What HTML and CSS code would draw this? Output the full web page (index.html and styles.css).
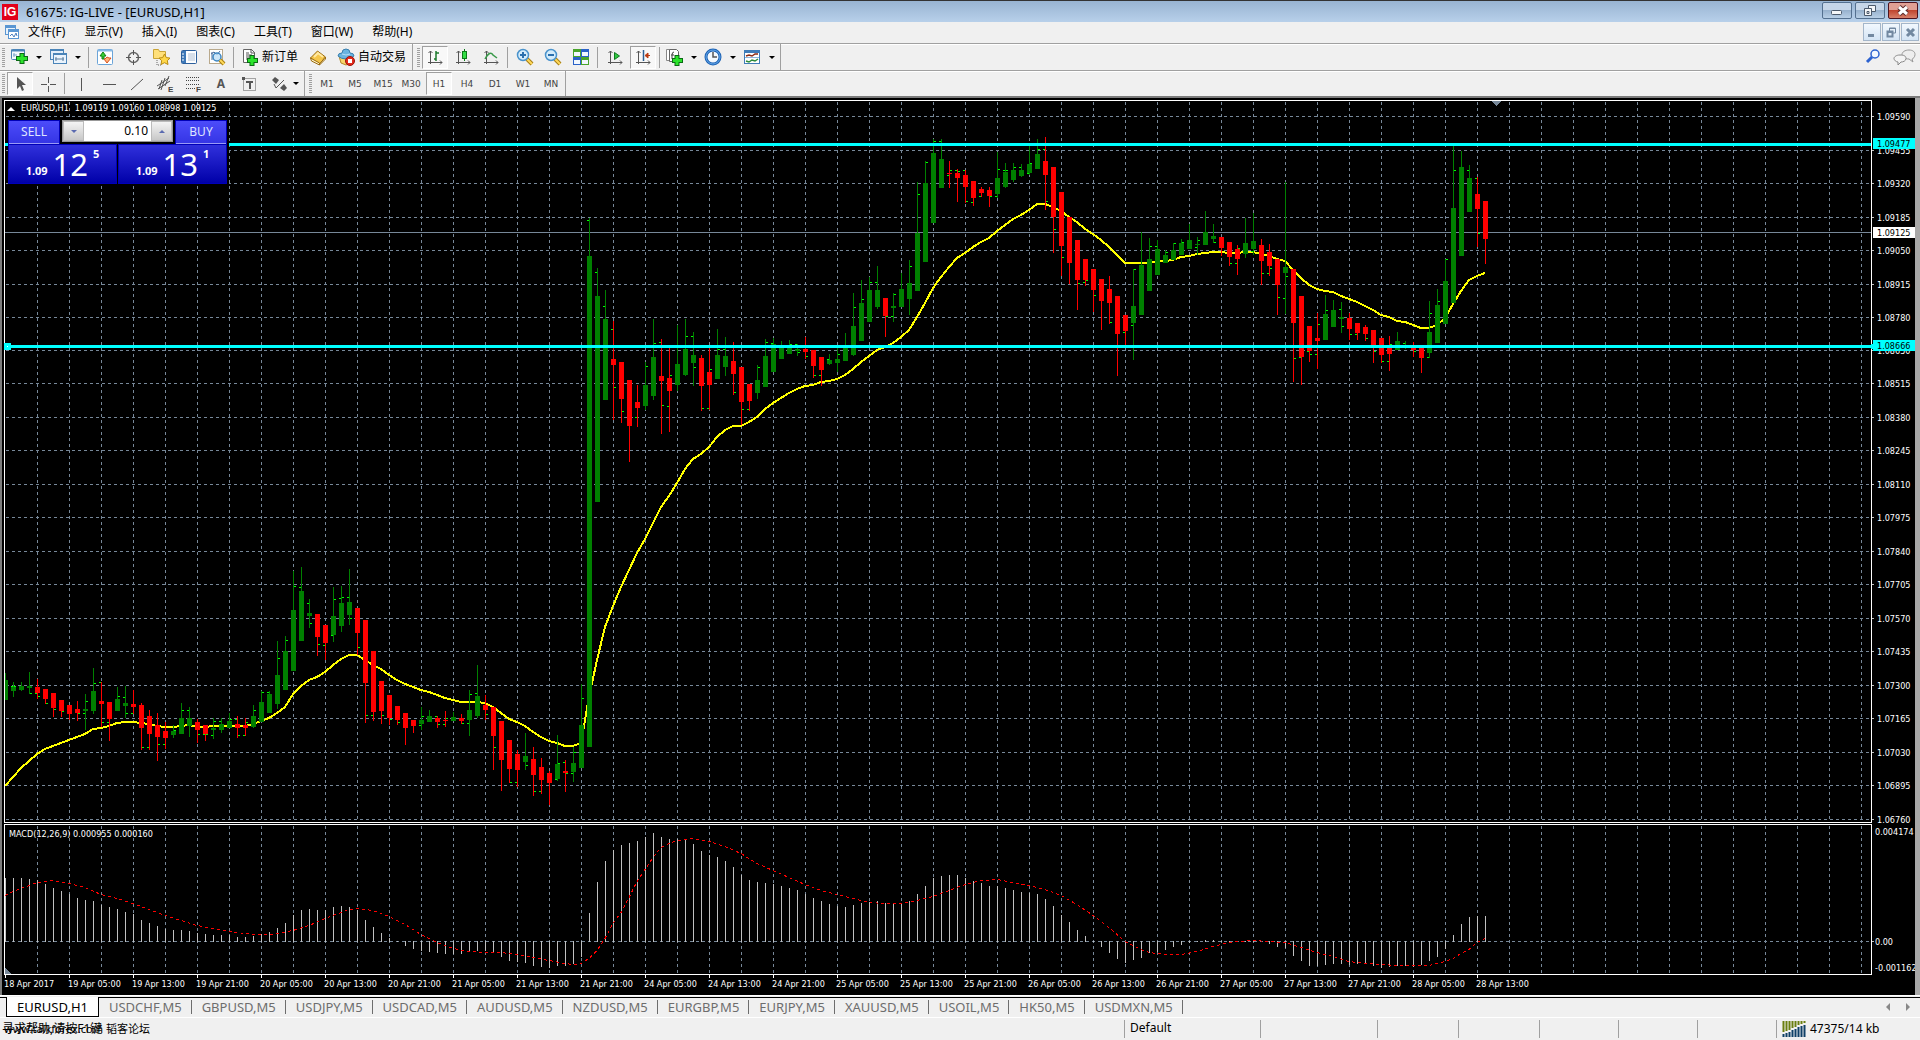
FILE: index.html
```html
<!DOCTYPE html>
<html lang="zh">
<head>
<meta charset="utf-8">
<title>61675: IG-LIVE - [EURUSD,H1]</title>
<link rel="stylesheet" href="styles.css">
</head>
<body>
<header class="titlebar">
  <span class="logo">IG</span>
  <h1 class="title">61675: IG-LIVE - [EURUSD,H1]</h1>
  <div class="win-buttons">
    <button class="win" aria-label="Minimize"><svg width="28" height="15"><rect x="8.5" y="7.5" width="10" height="4" rx="1" fill="#f4f6f8" stroke="#4c5a6c"/></svg></button>
    <button class="win" aria-label="Restore"><svg width="28" height="15"><g fill="#f4f6f8" stroke="#4c5a6c"><path d="M12.500 2.500h7v6h-7z"/><path d="M8.500 5.500h7v7h-7z"/></g><path d="M11 8.500h2v2h-2z" fill="none" stroke="#4c5a6c"/></svg></button>
    <button class="win win-close" aria-label="Close"><svg width="28" height="15"><path d="M10 4l8 7M18 4l-8 7" stroke="#5a2a2a" stroke-width="5"/><path d="M10 4l8 7M18 4l-8 7" stroke="#fff" stroke-width="3"/></svg></button>
  </div>
</header>

<nav class="menubar">
  <svg class="mdi-icon" width="16" height="16"><rect x="1.500" y="1.500" width="10" height="9" fill="#e8f2fc" stroke="#5a96d2"/><rect x="4.500" y="5.500" width="10" height="9" fill="#fff" stroke="#5a96d2"/><path d="M1 3h11M4 7h11" stroke="#5a96d2" stroke-width="2"/><path d="M6 12l2-2 2 3 2-4 1 3" fill="none" stroke="#4a7fc0"/></svg>
  <a href="#">文件(F)</a><a href="#">显示(V)</a><a href="#">插入(I)</a><a href="#">图表(C)</a><a href="#">工具(T)</a><a href="#">窗口(W)</a><a href="#">帮助(H)</a>
  <div class="mdi-buttons">
    <button class="mdi" aria-label="Minimize chart"><svg width="16" height="16"><path d="M4 11.500h6" stroke="#7288a0" stroke-width="3"/></svg></button>
    <button class="mdi" aria-label="Restore chart"><svg width="16" height="16"><path d="M6.500 7V4h6v5H10M6 4.500h7" fill="none" stroke="#7288a0"/><path d="M4.500 7.500h5v5h-5zM4 8h6" fill="none" stroke="#7288a0" stroke-width="2"/></svg></button>
    <button class="mdi" aria-label="Close chart"><svg width="16" height="16"><path d="M5 5l7 7M12 5l-7 7" stroke="#7288a0" stroke-width="3"/></svg></button>
  </div>
</nav>

<div class="bar">
  <div class="group">
    <i class="grip"></i>
    <button class="tool drop" aria-label="New chart"><svg width="18" height="18"><rect x="1.500" y="1.500" width="13" height="10" rx="1" fill="#f4f9ff" stroke="#4a84b8"/><path d="M1 2.500h14" stroke="#4a84b8" stroke-width="2"/><path d="M4 5v4M3 7h4" stroke="#7ba3c8"/><path d="M12 5v11M6 10.500h12" stroke="#0a6a14" stroke-width="5"/><path d="M12 6v9M7 10.500h10" stroke="#2be32b" stroke-width="3"/></svg></button>
    <button class="tool drop" aria-label="Profiles"><svg width="18" height="18"><rect x="1.500" y="1.500" width="13" height="10" fill="#e2eefa" stroke="#4a84b8"/><rect x="4.500" y="5.500" width="13" height="10" fill="#eaf3fc" stroke="#4a84b8"/><path d="M1 2h14M4 6h14" stroke="#4a84b8" stroke-width="2"/><path d="M7 9v4M6 11h9M14 9v4" stroke="#5a7f9f"/></svg></button>
    <i class="sep"></i>
    <button class="tool" aria-label="Market watch"><svg width="18" height="18"><rect x="1.500" y="1.500" width="15" height="15" rx="1" fill="#fff" stroke="#6ba4d8"/><path d="M2 2.500h14" stroke="#86b9e6" stroke-width="2"/><path d="M4 8l3-4 3 4H8v3H6V8z" fill="#35d035" stroke="#138013"/><path d="M9 11l2-2 2 1 2 0-4 5-3-4z" fill="#ffb27a" stroke="#d8521e"/></svg></button>
    <button class="tool" aria-label="Data window"><svg width="18" height="18"><circle cx="9.500" cy="9.500" r="5" fill="none" stroke="#666" stroke-width="1.500"/><path d="M9.500 2v5M9.500 12v5M2 9.500h5M12 9.500h5" stroke="#555"/></svg></button>
    <button class="tool" aria-label="Navigator"><svg width="18" height="18"><path d="M1.500 10.500v-9h5l1 2h6v7z" fill="#ffe07a" stroke="#c9a437"/><path d="M5 12v5h5" fill="none" stroke="#666" stroke-dasharray="1 1"/><path d="M12.500 6l1.800 3.600 3.700.5-2.700 2.600.7 3.800-3.500-1.800L9 16.500l.7-3.800L7 10.100l3.700-.5z" fill="#ffd84a" stroke="#b88a10"/></svg></button>
    <button class="tool" aria-label="Terminal"><svg width="18" height="18"><rect x="1.500" y="2.500" width="15" height="13" rx="1" fill="#fdfeff" stroke="#2c5f9c"/><rect x="2" y="3" width="4" height="12" fill="#3d78b8"/><path d="M8 6h7M8 8h7M8 10h7M8 12h7" stroke="#b0c0d4"/><path d="M2 6h2M2 9h2M2 12h2" stroke="#fff"/></svg></button>
    <button class="tool" aria-label="Strategy tester"><svg width="18" height="18"><rect x="1.500" y="1.500" width="13" height="14" fill="#fff" stroke="#b9a98c"/><path d="M4 4v8M3 6l3-2 3 3 3-4" stroke="#4a6a9a" fill="none"/><circle cx="9" cy="9" r="4" fill="#bfe0f8" fill-opacity=".8" stroke="#3d86c2" stroke-width="1.500"/><path d="M12 12l4 4" stroke="#a87f14" stroke-width="4"/><path d="M12 12l4 4" stroke="#ffd95a" stroke-width="2"/></svg></button>
    <i class="sep"></i>
    <button class="tool labelled"><svg width="18" height="18"><path d="M2.500 1.500h8l3 3v10h-11z" fill="#fff" stroke="#666"/><path d="M10 1v4h4M5 5h3M5 7h6M5 9h6M5 11h3" fill="none" stroke="#555"/><path d="M11 7v11M6 12.500h11" stroke="#0a6a14" stroke-width="5"/><path d="M11 8v9M7 12.500h9" stroke="#2be32b" stroke-width="3"/></svg>新订单</button>
    <button class="tool" aria-label="MetaEditor"><svg width="18" height="18"><path d="M1.500 10l7-7 8 6-6 7z" fill="#f5c64a" stroke="#9a6c14"/><path d="M1.500 10l1 3 8 4v-2zM10.500 16l6-7v2l-6 6" fill="#fff2c4" stroke="#9a6c14"/><path d="M5 9l4-4 5 4" fill="none" stroke="#ffe9a4" stroke-width="2"/></svg></button>
    <button class="tool labelled"><svg width="18" height="18"><path d="M2 8l2 7 5 2 5-2 2-7z" fill="#f8d66a" stroke="#b5882a"/><path d="M1 8q0-3 4-3 0-4 4-4t4 4q4 0 4 3-3 3-8 3T1 8z" fill="#6ab4e0" stroke="#3a7fae"/><path d="M5 6q4 2 8 0" fill="none" stroke="#b7ddf4"/><circle cx="13" cy="13" r="4.500" fill="#e32a1a" stroke="#9c1208"/><rect x="11" y="11" width="4" height="4" fill="#fff"/></svg>自动交易</button>
  </div>
  <div class="group">
    <i class="grip"></i>
    <button class="tool pressed" aria-label="Bar chart"><svg width="18" height="18"><use href="#axes"/><path d="M10 3v10M8 11h2M10 5h3" stroke="#1c7a2c" stroke-width="1.500"/></svg></button>
    <button class="tool" aria-label="Candlesticks"><svg width="18" height="18"><use href="#axes"/><path d="M10.500 1v12" stroke="#0b7a18"/><rect x="8.500" y="3.500" width="4" height="7" fill="#33dd44" stroke="#0b7a18"/></svg></button>
    <button class="tool" aria-label="Line chart"><svg width="18" height="18"><use href="#axes"/><path d="M3 11q5-9 8-4l4 3" fill="none" stroke="#3a9a4a" stroke-width="1.500"/></svg></button>
    <i class="sep"></i>
    <button class="tool" aria-label="Zoom in"><svg width="18" height="18"><use href="#lens"/><path d="M4 7h6M7 4v6" stroke="#2a6fae" stroke-width="2"/></svg></button>
    <button class="tool" aria-label="Zoom out"><svg width="18" height="18"><use href="#lens"/><path d="M4 7h6" stroke="#2a6fae" stroke-width="2"/></svg></button>
    <button class="tool" aria-label="Tile windows"><svg width="18" height="18"><rect x="1" y="1" width="8" height="8" fill="#4aa52c"/><rect x="9" y="1" width="8" height="8" fill="#2a62c8"/><rect x="1" y="9" width="8" height="8" fill="#2a62c8"/><rect x="9" y="9" width="8" height="8" fill="#4aa52c"/><path d="M2 4h6v4H2zM10 4h6v4h-6zM2 12h6v4H2zM10 12h6v4h-6z" fill="#f2f8ff"/></svg></button>
    <i class="sep"></i>
    <button class="tool" aria-label="Auto scroll"><svg width="18" height="18"><use href="#axes"/><path d="M8.500 4.500v7l5-3.500z" fill="#30c840" stroke="#0f7a20"/></svg></button>
    <button class="tool pressed" aria-label="Chart shift"><svg width="18" height="18"><use href="#axes"/><path d="M9.500 2v11" stroke="#2a5f94" stroke-width="1.500"/><path d="M12 7.500h4M14 5l-3 2.500 3 2.500z" fill="#c8401c" stroke="#b8380f"/></svg></button>
    <i class="sep"></i>
    <button class="tool drop" aria-label="Indicators"><svg width="18" height="18"><path d="M1.500 1.500h3v11h-3z" fill="#fff" stroke="#888"/><path d="M4.500 1.500h7l2 2v10h-9z" fill="#fff" stroke="#666"/><path d="M9 4q-2 0-2 3v4M6 7h3" fill="none" stroke="#444"/><path d="M12 7v11M7 12.500h11" stroke="#0a6a14" stroke-width="5"/><path d="M12 8v9M8 12.500h9" stroke="#2be32b" stroke-width="3"/></svg></button>
    <button class="tool drop" aria-label="Periods"><svg width="18" height="18"><circle cx="9" cy="9" r="7" fill="#f4f9fe" stroke="#1d62b4" stroke-width="3"/><path d="M9 4v5h4" fill="none" stroke="#555" stroke-width="1.500"/><circle cx="9" cy="9" r="7" fill="none" stroke="#64a8ea"/></svg></button>
    <button class="tool drop" aria-label="Templates"><svg width="18" height="18"><rect x="1.500" y="2.500" width="15" height="13" fill="#fff" stroke="#3f7cb8"/><path d="M1 3.500h16" stroke="#3f7cb8" stroke-width="3"/><path d="M3 8l3-1 3 1 3-2 3 0" fill="none" stroke="#8c2a14" stroke-width="1.500"/><path d="M2 9.500h14" stroke="#8cb6dc"/><path d="M3 13l3 1 3-2 3 1 3-2" fill="none" stroke="#2a8a3a" stroke-width="1.500"/></svg></button>
  </div>
  <div class="extras">
    <button class="tool" aria-label="Search"><svg width="18" height="18"><circle cx="11" cy="6" r="4" fill="#f2f8ff" stroke="#2c62d0" stroke-width="1.500"/><path d="M8 9l-5 5" stroke="#2c62d0" stroke-width="3"/></svg></button>
    <button class="tool" aria-label="Chat"><svg width="24" height="18"><path d="M16 2c4 0 6 2 6 4.500S20 11 19 11l1 3-4-3c-4 0-7-2-7-4.500S12 2 16 2z" fill="#eee" stroke="#999"/><path d="M7 7c4 0 6 1 6 3.500S10 14 8 14l-3 3v-3c-2 0-4-2-4-3.500S3 7 7 7z" fill="#f4f4f4" stroke="#888"/></svg></button>
  </div>
</div>

<div class="bar bar-2">
  <div class="group">
    <i class="grip"></i>
    <button class="tool pressed" aria-label="Cursor"><svg width="18" height="18"><path d="M6 2v12l3-3 2 5 2-1-2-5h4z" fill="#555"/></svg></button>
    <button class="tool" aria-label="Crosshair"><svg width="18" height="18"><path d="M9.500 2v6M9.500 11v6M2 9.500h6M11 9.500h6" stroke="#555"/></svg></button>
    <i class="sep"></i>
    <button class="tool" aria-label="Vertical line"><svg width="18" height="18"><path d="M9.500 3v13" stroke="#555"/></svg></button>
    <button class="tool" aria-label="Horizontal line"><svg width="18" height="18"><path d="M3 9.500h13" stroke="#555"/></svg></button>
    <button class="tool" aria-label="Trendline"><svg width="18" height="18"><path d="M3 15L15 4" stroke="#555"/></svg></button>
    <button class="tool" aria-label="Channel"><svg width="18" height="18"><path d="M1 11L13 3M2 14l12-8M5 15L9 3M9 11l4-10M3 14L6 5" stroke="#555"/><text x="12" y="17" class="ico-text">E</text></svg></button>
    <button class="tool" aria-label="Fibonacci"><svg width="18" height="18"><path d="M2 2.500h14M2 5.500h14M2 9.500h14M2 13.500h9" stroke="#444" stroke-dasharray="1 1"/><text x="12" y="17" class="ico-text">F</text></svg></button>
    <button class="tool letter">A</button>
    <button class="tool" aria-label="Text label"><svg width="18" height="18"><rect x="3.500" y="3.500" width="12" height="12" fill="none" stroke="#555" stroke-dasharray="1 1"/><path d="M2 2h3v3H2zM6 6h7v2h-2v6H9V8H6z" fill="#555"/></svg></button>
    <button class="tool drop arrows" aria-label="Arrows"><svg width="18" height="18"><path d="M2 5l3-3 4 3-3 4zM10 13l4-4 3 4-3 3z" fill="#555"/><path d="M4 9l2 4 8-8" fill="none" stroke="#555"/></svg></button>
  </div>
  <div class="group">
    <i class="grip"></i>
    <button class="tool tf">M1</button><button class="tool tf">M5</button><button class="tool tf">M15</button><button class="tool tf">M30</button><button class="tool tf pressed">H1</button><button class="tool tf">H4</button><button class="tool tf">D1</button><button class="tool tf">W1</button><button class="tool tf">MN</button>
  </div>
</div>

<svg class="defs" width="0" height="0" aria-hidden="true">
  <defs>
    <g id="axes"><path d="M4.500 3v13M2 14.500h14M2.500 5l2-2 2 2M14 12.500l2 2-2 2" fill="none" stroke="#555"/></g>
    <g id="lens"><path d="M11 11l5 5" stroke="#a87f14" stroke-width="4"/><path d="M11 11l5 5" stroke="#ffd95a" stroke-width="2"/><circle cx="7" cy="7" r="5.500" fill="#d4ecfb" stroke="#4a93cc" stroke-width="1.500"/></g>
  </defs>
</svg>

<main class="chart">
  <svg class="plot" id="plot" role="img" aria-label="EURUSD H1"></svg>
  <svg class="axis" id="axis"></svg>
  <p class="quote-line"><span class="up"></span><span>EURUSD,H1</span><span>1.09119 1.09160 1.08998 1.09125</span></p>
  <form class="trade">
    <button type="button" class="side">SELL</button>
    <div class="lots">
      <button type="button" aria-label="Less"><span class="down-s"></span></button>
      <input type="text" value="0.10" aria-label="Lots">
      <button type="button" aria-label="More"><span class="up-s"></span></button>
    </div>
    <button type="button" class="side">BUY</button>
    <button type="button" class="price"><b>1.09</b><span>12</span><sup>5</sup></button>
    <button type="button" class="price"><b>1.09</b><span>13</span><sup>1</sup></button>
  </form>
</main>

<nav class="tabs">
  <a href="#" class="tab current">EURUSD,H1</a><a href="#" class="tab">USDCHF,M5</a><a href="#" class="tab">GBPUSD,M5</a><a href="#" class="tab">USDJPY,M5</a><a href="#" class="tab">USDCAD,M5</a><a href="#" class="tab">AUDUSD,M5</a><a href="#" class="tab">NZDUSD,M5</a><a href="#" class="tab">EURGBP,M5</a><a href="#" class="tab">EURJPY,M5</a><a href="#" class="tab">XAUUSD,M5</a><a href="#" class="tab">USOIL,M5</a><a href="#" class="tab">HK50,M5</a><a href="#" class="tab">USDMXN,M5</a>
  <div class="scroll"><button aria-label="Scroll left"><svg width="6" height="8"><path d="M4 0v8L0 4z" fill="#888"/></svg></button><button aria-label="Scroll right"><svg width="6" height="8"><path d="M1 0v8l4-4z" fill="#888"/></svg></button></div>
</nav>

<footer class="status">
  <div class="help"><span>寻求帮助,请按F1键</span><span class="site">www.talkforex.com 韬客论坛</span></div>
  <div class="cell w-136">Default</div>
  <div class="cell w-117"></div>
  <div class="cell w-81"></div>
  <div class="cell w-81"></div>
  <div class="cell w-79"></div>
  <div class="cell w-79"></div>
  <div class="cell w-79"></div>
  <div class="cell traffic"><svg width="24" height="16"><path d="M1.500 0v11M4.500 0v10M7.500 0v9M10.500 0v7M13.500 0v6M16.500 0v4M19.500 0v3M22.500 0v2" stroke="#6a7f10" stroke-width="2"/><path d="M1.500 13v3M4.500 12v4M7.500 11v5M10.500 9v7M13.500 8v8M16.500 6v10M19.500 5v11M22.500 4v12" stroke="#0f3f66" stroke-width="2"/></svg>47375/14 kb</div>
</footer>
<script src="chart.js"></script>
</body>
</html>
```
FILE: styles.css
```css
* { box-sizing: border-box; }
body {
  margin: 0;
  min-height: 100vh;
  display: flex;
  flex-direction: column;
  background: #f0f0f0;
  color: #000;
  font: 12px/16px "Noto Sans", "Open Sans", "Noto Sans CJK SC", sans-serif;
  overflow-x: hidden;
}
button { padding: 0; border: 0; background: none; font: inherit; color: inherit; }
a { color: inherit; text-decoration: none; }
svg { display: block; flex: none; }
.defs { position: absolute; }

.titlebar {
  display: flex;
  align-items: center;
  height: 22px;
  border-top: 1px solid #333;
  background: linear-gradient(#98b4d2, #b8d0ea);
}
.logo {
  width: 16px; height: 16px; margin: 0 8px 0 2px;
  background: #e2001a; color: #fff;
  font: bold 12px/16px "Liberation Sans", sans-serif;
  text-align: center;
}
.title { margin: 0; font-size: 13px; font-weight: 400; flex: 1; }
.win-buttons { display: flex; gap: 3px; margin: 0 2px 2px 0; }
.win {
  width: 30px; height: 17px;
  border: 1px solid #54708f; border-radius: 2px;
  background: linear-gradient(#c6d6e8 45%, #98b2ce 50%, #b8cfe6);
}
.win-close { border-color: #4c1420; background: linear-gradient(#e0a094 45%, #c04630 50%, #d8806a); }

.menubar {
  display: flex;
  align-items: center;
  gap: 19px;
  height: 22px;
  padding-bottom: 2px;
  border-bottom: 1px solid #a0a0a0;
  box-shadow: 0 1px #fff;
}
.mdi-icon { margin: 0 -11px 0 4px; }
.mdi-buttons { display: flex; gap: 1px; margin: 0 1px 0 auto; }
.mdi { width: 18px; height: 18px; border: 1px solid #a4b6ca; background: linear-gradient(#f2f8fe, #d4e4f4); }

.bar { display: flex; height: 27px; border-bottom: 1px solid #a0a0a0; box-shadow: inset 0 1px #fff, 0 1px #fff; }
.bar-2 { border-bottom: 2px solid #7c7c7c; box-shadow: none; }
.group { display: flex; align-items: center; border-right: 1px solid #a0a0a0; }
.grip {
  width: 3px; height: 19px; margin: 0 3px 0 2px;
  background: repeating-linear-gradient(#a0a0a0 0 1px, #f0f0f0 1px 2px);
}
.group + .group .grip { margin-left: 4px; margin-right: 1px; }
.bar-2 .grip { margin-right: 1px; }
.sep { width: 1px; height: 21px; background: #a0a0a0; margin: 0 2px; }
.group + .group .sep { margin-right: 3px; }
.tool { display: flex; align-items: center; justify-content: center; width: 28px; height: 23px; }
.pressed {
  width: 26px; margin: 0 1px;
  border: 1px solid; border-color: #a0a0a0 #fff #fff #a0a0a0;
  background: #f8f8f8;
}
.drop { width: 39px; justify-content: space-between; padding: 0 5px 0 2px; }
.arrows { width: 41px; padding: 0 5px 0 7px; }
.drop::after { content: ""; border: 3px solid transparent; border-top-color: #000; border-bottom: 0; }
.labelled { width: auto; gap: 3px; padding: 0 6px 0 5px; }
.letter, .tf { color: #444; font: 10px/16px "DejaVu Sans", "Noto Sans", sans-serif; }
.letter { font: bold 12px/16px "Noto Sans", sans-serif; color: #555; }
.ico-text { font: bold 8px "Liberation Sans", sans-serif; fill: #444; }
.tf { font-size: 9px; }
.extras { display: flex; align-items: center; gap: 4px; margin: 0 1px 0 auto; }

.chart {
  position: relative;
  display: flex;
  background: #000;
  border-left: 2px solid #7c7c7c;
  border-right: 5px solid #a8a8a8;
}
.chart svg { height: 897px; shape-rendering: crispEdges; }
.plot { flex: 1; min-width: 0; }
.axis { width: 44px; }
.chart text { font: 9px "DejaVu Sans Condensed", "Noto Sans", sans-serif; fill: #fff; }
.chart .dark { fill: #000; }
.grid { stroke: #778899; stroke-dasharray: 3 3; }
.frame { stroke: #fff; }
.bull { fill: #008000; }
.bear { fill: #f00; }
.tick { fill: #0f0; }
.level { fill: #0ff; }
.average { fill: none; stroke: #ff0; stroke-width: 2; }
.signal { fill: none; stroke: #f00; stroke-dasharray: 3 3; }
.hist { fill: #c0c0c0; }
.quote-line {
  position: absolute; left: 5px; top: 3px; margin: 0;
  display: flex; align-items: center; gap: 6px;
  color: #fff; font: 9px/15px "DejaVu Sans Condensed", "Noto Sans", sans-serif;
}
.up { border: 4px solid transparent; border-bottom-color: #fff; border-top: 0; }

.trade {
  position: absolute; left: 6px; top: 22px;
  width: 221px;
  display: grid;
  grid-template-columns: 52px 56px 56px 52px;
  column-gap: 1px;
  padding-right: 2px;
  background: #000;
  color: #fff;
}
.side { height: 24px; background: linear-gradient(#4c4cfa, #3434e4); border: 1px solid #0000b8; border-bottom: 0; color: #dfe4ff; box-shadow: inset 0 -1px #9a9af6; padding-bottom: 2px; }
.lots { grid-column: span 2; display: flex; height: 22px; margin: 0 1px; background: #fff; border: 1px solid #999; }
.lots button { width: 21px; background: linear-gradient(#f4f4f4, #c8c8c8); border: 1px solid #bbb; display: flex; align-items: center; justify-content: center; }
.lots input { flex: 1; min-width: 0; padding: 0 3px 0 0; border: 0; background: #fff; font: inherit; text-align: right; }
.down-s { border: 3px solid transparent; border-top-color: #5a6ab0; border-bottom: 0; }
.up-s { border: 3px solid transparent; border-bottom-color: #5a6ab0; border-top: 0; }
.price {
  grid-column: span 2;
  display: flex; align-items: flex-end; justify-content: center; gap: 5px;
  height: 40px; padding-bottom: 6px;
  background: linear-gradient(#3030dc, #0000a8);
  border: 1px solid #0000b8;
}
.price b { font-size: 11px; line-height: 13px; }
.price span { font-size: 31px; line-height: 26px; }
.price sup { font-size: 11px; font-weight: bold; line-height: 12px; align-self: flex-start; margin-top: 3px; }

.tabs {
  display: flex;
  height: 23px;
  padding-left: 6px;
  border-top: 1px solid #fff;
  border-bottom: 1px solid #fff;
  box-shadow: inset 0 1px #f0f0f0, inset 0 2px #000;
  font-size: 13px;
}
.tab { position: relative; padding: 3px 10px 0; color: #6d6d6d; line-height: 16px; }
.tab::after { content: ""; position: absolute; right: 0; top: 4px; height: 14px; border-right: 1px solid #6d6d6d; }
.current { margin-top: 1px; padding: 2px 10px 0; height: 20px; background: #fff; color: #000; border: 1px solid #000; border-top: 0; }
.current::after { display: none; }
.scroll { display: flex; gap: 13px; margin: 0 9px 0 auto; align-items: center; }

.status { display: flex; flex: 1; min-height: 22px; align-items: center; }
.help { position: relative; flex: 1; padding-left: 2px; white-space: nowrap; }
.site { position: absolute; left: 4px; top: 0; font-size: 11px; }
.cell { height: 18px; padding-left: 5px; border-left: 1px solid #a0a0a0; white-space: nowrap; }
.w-136 { width: 136px; }
.w-117 { width: 117px; }
.w-81 { width: 81px; }
.w-79 { width: 79px; }
.traffic { display: flex; gap: 4px; width: 144px; align-items: center; }
```
FILE: chart.js
```js
// One entry per hourly bar: colour, high, body top, body bottom, low, then
// optional open (L) and close (R) ticks. Values are window rows.
const bars = `G 673 680 700 700|G 682 686 691 697 L686 R686|G 682 686 690 691|G 672 686 688 694 R693|R 679 687 693 699 R696 L693|R 689 689 699 704 R703|R 693 693 708 717 R709|R 700 700 711 717 R711|R 705 705 714 720|R 701 709 713 721 R713
G 694 709 711 730 R701 L713|G 668 691 711 714 R683|R 682 701 704 727 L682 R722|R 702 702 719 741 L722|G 687 699 711 711 R696|G 686 703 706 718 L697 R713|R 690 704 707 714 L713|R 703 705 728 750 R747|R 710 716 734 750 L747|R 713 725 737 761 R744
R 722 731 738 749 L744|G 725 731 735 738 R730|G 703 718 734 734 R710|G 707 718 726 737 L710|R 719 722 730 743 R734|R 725 725 734 741 L734 R734|G 718 728 730 739 L735 R721|G 718 724 730 733 L721|G 713 721 728 728 R719|R 716 724 728 738 L719 R735
R 718 725 728 736 L735 R722|G 705 716 727 728 R710|G 691 702 722 722 R692|G 691 694 713 713 L692|G 641 675 704 709 R658|G 636 651 690 690 R640|G 571 610 671 671 R586|G 567 591 641 641 L587|G 599 613 616 628 L603 R623|R 614 614 637 656 R644
R 625 625 643 660 L645|G 587 616 635 642 R599 L635|G 586 603 626 632 L598 R597|G 569 602 615 625 L597 R618|R 608 608 633 655 R647|R 620 620 683 723 R715|R 651 651 712 721 L715|R 681 681 711 724 R715|R 695 695 718 725 R719|R 706 706 720 725 R722
R 713 713 728 745|R 720 720 726 733|G 707 720 724 730 L725 R716|G 710 716 722 722|R 716 718 722 728 L716 R724|R 711 720 721 727 L724 R718|G 712 717 721 721|R 714 718 721 724 R723|G 690 710 720 736 L723 R694|G 665 696 716 718 L693
R 695 705 710 720 R714|R 707 707 736 770 R747|R 721 721 760 791|R 740 740 769 783 R782|R 750 754 770 787 L782|G 733 756 762 770 R765|R 747 759 775 796 R791|R 758 767 780 794 L791|R 771 773 783 805|G 735 764 779 781 R763 L779
R 760 771 773 792 L762 R773|G 747 763 772 782 L773 R752|G 684 725 768 768 R698|G 218 256 747 747 L220|G 268 296 502 502 L272|G 290 319 400 400 L306|R 321 359 365 420 L329 R387|R 362 362 399 423 R411|R 380 380 426 462|R 385 402 408 427 L417
G 362 385 406 410 R366|G 319 357 396 400 R343|R 339 376 381 434 L342 R405|R 347 378 391 432 L406 R375|G 325 364 385 391|G 319 349 375 376 R336|G 332 355 363 386 L336 R367|R 355 358 386 411 R408|R 348 372 385 410 L408 R369|G 329 355 379 379 R349
G 337 356 367 376 L349|R 342 361 374 395 R392|R 367 367 402 425 R409|R 384 384 401 411 L409|G 365 380 393 399 R367|G 339 356 387 387 R342|G 338 344 372 372 L343|G 341 348 359 359|G 340 345 354 354 R344|G 344 349 351 356 L344 R352
R 337 349 352 359 R356|R 350 350 366 378 R375|R 357 357 370 386 L375|G 354 360 364 365 L359|G 346 359 363 372 R354|G 333 347 361 361|G 293 326 355 356 R307|G 280 303 341 341 R299|G 277 290 322 322 R282|G 266 290 307 309 L282
R 298 298 316 337 R316|G 293 306 308 322 L316 R294|G 273 289 307 307|G 260 283 299 315 R266|G 182 233 291 291 R194|G 161 183 262 262 R162|G 139 153 223 223 R141|G 139 159 188 188 L141|R 161 173 174 188 L175 R170|R 169 173 178 202 L170 R171
R 170 175 187 203 L170 R201|R 181 181 198 206 L202|R 187 189 193 197 L196|R 187 190 196 207 R196|G 152 178 194 198 L196 R169|G 163 172 187 188 L170 R170|G 163 170 180 182 R167|G 164 170 176 177 L167|G 145 164 173 175 L173 R163|G 139 154 169 169 R149
R 137 161 175 210 L149 R201|R 167 167 217 253 R229|R 192 192 246 276 R257|R 217 217 263 284|R 240 240 280 310 R283|R 259 259 280 286 L282 R280|R 269 269 290 312 R295|R 279 279 301 330|R 276 289 303 324 R322|R 296 296 334 376
R 315 315 331 346 L332|G 269 306 323 360 L325 R269|G 232 265 315 315|G 238 259 291 291 R246|G 240 249 275 275 L246|G 250 255 263 263 R252|G 243 250 260 260 R243|G 239 243 255 255 R242|G 224 240 249 249|G 237 244 245 255 L247 R240
G 211 232 245 245|G 224 236 239 243 R242|R 237 237 248 256|R 242 242 257 266 R263|R 245 249 259 275 L263 R248|G 218 243 254 258|G 213 241 249 255 L251|R 239 245 261 285 R273|R 244 252 266 276 L273 R268|R 259 259 285 315 R297
G 182 267 273 314 L298 R276|R 269 269 323 382 R358|R 296 296 357 385 L357|R 326 326 351 362 R354 L351|R 313 338 341 369 L354 R324|G 295 314 340 340 R310|G 300 310 327 327|G 302 317 319 333 L309 R326|R 313 318 329 340 R334|R 323 323 333 340 L334
R 325 327 334 341 R338|R 330 330 346 363 R351|R 338 338 355 363 R361|R 336 346 354 371 L361 R344|G 332 341 350 350|G 341 346 347 349 L343|R 342 347 350 357 R351|R 348 348 358 373|G 301 332 353 358 L357 R313|G 289 305 343 343 R301
G 259 281 324 324 R259|G 145 208 303 303 R170|G 151 167 256 256|G 165 178 212 212 L170|R 177 194 209 247 L178 R233|R 201 201 239 264`.split(/[|\n]/);

const average = [786,777,768,761,754,749,746,743,740,737,734,729,728,726,723,722,722,723,724,726,727,727,726,725,727,727,726,726,726,726,726,724,721,718,713,707,694,686,680,677,672,665,659,655,655,660,665,669,675,680,684,687,690,692,695,698,700,702,702,702,703,707,713,719,722,726,732,737,741,743,746,746,743,697,660,627,606,587,570,553,539,523,507,496,483,469,459,454,447,437,430,426,426,422,417,409,403,398,393,389,386,385,382,381,379,375,369,362,356,350,347,343,337,330,317,303,288,277,267,258,253,247,242,238,231,225,219,215,210,204,204,207,211,217,222,229,234,240,247,255,263,263,263,263,261,261,260,257,256,254,253,252,252,253,253,252,252,254,256,259,261,270,278,285,289,291,292,296,299,302,306,310,315,317,321,322,325,328,328,325,318,304,291,280,276,273];

const macd = [878,878,878,879,880,884,888,891,894,898,900,901,905,907,909,912,914,920,923,926,929,930,930,931,933,934,935,935,935,937,937,936,934,932,928,923,915,910,909,910,910,907,906,907,910,920,927,933,938,941,945,948,950,951,952,953,953,953,951,950,950,952,956,960,961,962,965,966,967,965,965,963,956,913,882,861,850,845,843,841,837,833,837,839,839,840,844,851,855,857,861,867,875,880,882,883,884,886,888,890,894,898,901,904,906,907,905,903,902,901,903,903,903,901,894,886,878,876,875,875,878,881,883,886,886,888,890,892,893,894,899,906,915,922,930,936,941,946,952,958,962,959,957,952,951,949,946,944,942,941,940,940,941,941,941,941,940,941,943,946,947,955,960,965,965,964,963,963,964,963,963,965,967,966,965,965,966,964,960,956,948,935,924,917,916,916];

// Pairs of bar index and row.
const signal = [0,895,1,891,3,885,4,882,6,880,8,883,10,887,12,894,14,898,16,903,18,909,20,915,22,920,24,925,26,928,28,931,30,933,31,934,33,934,34,933,36,930,38,925,40,918,42,912,43,909,44,908,46,910,48,916,50,924,52,934,54,942,56,948,58,951,60,952,62,952,64,954,66,957,68,960,70,963,71,964,72,963,73,958,74,950,75,938,76,923,77,912,78,897,79,881,80,869,81,857,82,847,83,843,84,840,86,838,88,841,90,846,92,853,94,863,96,870,98,877,100,884,102,890,104,894,106,898,108,902,110,903,112,903,113,902,114,900,116,896,118,890,120,884,122,880,124,879,126,882,128,885,130,889,132,895,134,904,136,915,138,927,140,941,142,949,143,952,145,954,147,954,149,951,151,946,152,944,153,942,156,940,158,941,160,942,162,947,164,952,166,956,168,961,170,963,172,964,174,965,178,965,179,963,180,961,181,958,182,953,183,949,184,942,185,938];

const prices = ["1.09590","1.09455","1.09320","1.09185","1.09050","1.08915","1.08780","1.08650","1.08515","1.08380","1.08245","1.08110","1.07975","1.07840","1.07705","1.07570","1.07435","1.07300","1.07165","1.07030","1.06895","1.06760"];
const rows = [116,150,183,217,250,284,317,350,383,417,450,484,517,551,584,618,651,685,718,752,785,819];
const dates = ["18 Apr 2017","19 Apr 05:00","19 Apr 13:00","19 Apr 21:00","20 Apr 05:00","20 Apr 13:00","20 Apr 21:00","21 Apr 05:00","21 Apr 13:00","21 Apr 21:00","24 Apr 05:00","24 Apr 13:00","24 Apr 21:00","25 Apr 05:00","25 Apr 13:00","25 Apr 21:00","26 Apr 05:00","26 Apr 13:00","26 Apr 21:00","27 Apr 05:00","27 Apr 13:00","27 Apr 21:00","28 Apr 05:00","28 Apr 13:00"];

const rect = (c, x, y, w, h) => `<rect class="${c}" x="${x}" y="${y}" width="${w}" height="${h}"/>`;
const across = (c, y, x = 4) => `<line class="${c}" x1="${x}" x2="120%" y1="${y + 0.5}" y2="${y + 0.5}"/>`;
const down = (c, x, a, b) => `<line class="${c}" x1="${x + 0.5}" x2="${x + 0.5}" y1="${a}" y2="${b}"/>`;
const X = i => 5 + 8 * i;

const plot = document.getElementById("plot");
let s = "";
for (let x = 37; x < window.innerWidth - 50; x += 32) s += down("grid", x, 102, 822) + down("grid", x, 826, 974);
rows.forEach(y => { s += across("grid", y, 6); });
s += across("grid", 941, 6);
s += `<line x1="5" x2="120%" y1="232.500" y2="232.500" stroke="#778899"/>`;
macd.forEach((y, i) => { s += y < 941 ? rect("hist", X(i), y, 1, 942 - y) : rect("hist", X(i), 941, 1, y - 940); });
const pts = [];
for (let k = 0; k < signal.length; k += 2) pts.push(`${X(signal[k])},${signal[k + 1] + 0.5}`);
s += `<polyline class="signal" points="${pts.join(" ")}"/>`;
s += `<polyline class="average" points="${average.map((y, i) => `${X(i)},${y}`).join(" ")}"/>`;
bars.forEach((b, i) => {
  const [colour, h, t, bo, l, ...ticks] = b.split(" ");
  const c = colour === "G" ? "bull" : "bear", x = X(i);
  s += rect(c, x, h, 1, l - h) + rect(c, i ? x - 2 : x, t, i ? 5 : 3, bo - t);
  ticks.forEach(k => { s += rect("tick", k[0] === "L" ? x - 2 : x + 1, k.slice(1), 2, 1); });
});
s += rect("level", 5, 143, "120%", 3) + rect("level", 5, 345, "120%", 3);
s += rect("level", 4, 343, 7, 7) + `<rect x="7" y="346" width="1" height="1" fill="#fff"/>`;
s += across("frame", 100) + across("frame", 822) + across("frame", 824) + across("frame", 974);
s += down("frame", 4, 100, 343) + down("frame", 4, 350, 823) + down("frame", 4, 824, 975);
s += `<path d="M5 968l6 6H5zM1491 101h10l-5 5z" fill="#778899"/>`;
s += `<text x="9" y="837">MACD(12,26,9) 0.000955 0.000160</text>`;
dates.forEach((d, i) => { s += down("frame", 5 + 64 * i, 975, 978) + `<text x="${4 + 64 * i}" y="987">${d}</text>`; });
plot.innerHTML = `<g transform="translate(-2 -98)">${s}</g>`;

let a = down("frame", 0, 100, 823) + down("frame", 0, 824, 975);
rows.forEach((y, i) => { a += rect("hist", 1, y, 2, 1) + `<text x="6" y="${y + 4}">${prices[i]}</text>`; });
a += rect("hist", 1, 941, 2, 1) + `<text x="4" y="835">0.004174</text><text x="4" y="945">0.00</text><text x="4" y="971">-0.001162</text>`;
a += rect("level", 2, 138, 42, 11) + `<text class="dark" x="6" y="147">1.09477</text>`;
a += rect("level", 2, 340, 42, 11) + `<text class="dark" x="6" y="349">1.08666</text>`;
a += rect("level", 0, 344, 2, 5);
a += `<rect x="2" y="227" width="42" height="11" fill="#fff"/><text class="dark" x="6" y="236">1.09125</text>`;
document.getElementById("axis").innerHTML = `<g transform="translate(0 -98)">${a}</g>`;
```
